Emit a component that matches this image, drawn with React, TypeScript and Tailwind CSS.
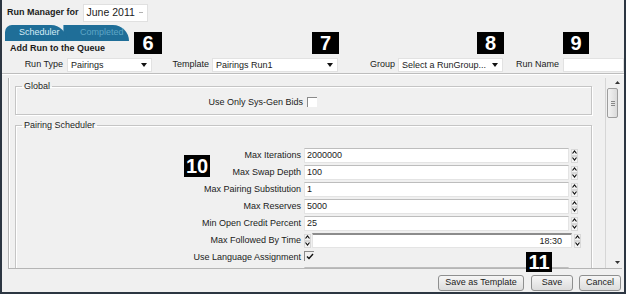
import type { FC, ReactNode } from 'react';

const Badge: FC<{ children: ReactNode; className: string }> = ({ children, className }) => (
  <div
    className={`absolute flex items-center justify-center bg-black text-white font-bold text-[20px] leading-none ${className}`}
  >
    {children}
  </div>
);

const Caret = () => (
  <svg width="6" height="4" viewBox="0 0 6 4" className="shrink-0">
    <path d="M0 0H6L3 4Z" fill="#111" />
  </svg>
);

const Select: FC<{ text: string; className: string }> = ({ text, className }) => (
  <div
    className={`flex items-center justify-between h-[14px] bg-white border border-[#e2e2e2] pl-[3px] pr-[4px] ${className}`}
  >
    <span className="leading-[12px] whitespace-nowrap">{text}</span>
    <Caret />
  </div>
);

const Arrow: FC<{ up?: boolean }> = ({ up }) => (
  <div className="flex items-center justify-center w-[7px] h-[7px] bg-[#f4f4f4] border border-[#d8d8d8]">
    <svg width="5" height="4" viewBox="0 0 5 4">
      <path d={up ? 'M0.5 3.5L2.5 1L4.5 3.5' : 'M0.5 0.5L2.5 3L4.5 0.5'} stroke="#111" strokeWidth="1.2" fill="none" />
    </svg>
  </div>
);

const Spin: FC<{ className?: string }> = ({ className = '' }) => (
  <div className={`flex flex-col w-[7px] h-[14px] ${className}`}>
    <Arrow up />
    <Arrow />
  </div>
);

const Row: FC<{ label: string; value?: string }> = ({ label, value }) => (
  <div className="flex items-center h-[17px]">
    <div className="w-[288px] pr-[3px] text-right whitespace-nowrap">{label}</div>
    <div className="w-[265px] h-[15px] bg-white border border-[#e4e4e4] border-t-[#bdbdbd] pl-[2px] leading-[13px]">
      {value}
    </div>
    <Spin className="ml-[2px]" />
  </div>
);

const Button: FC<{ text: string; className: string }> = ({ text, className }) => (
  <div
    className={`flex items-center justify-center h-[16px] whitespace-nowrap rounded-[3px] border border-[#8e8f8f] bg-gradient-to-b from-[#f6f6f6] to-[#dcdcdc] ${className}`}
  >
    {text}
  </div>
);

const App: FC = () => {
  return (
    <div className="relative w-[626px] h-[294px] overflow-hidden bg-[#f0f0f0] border-x-2 border-b-2 border-[#2c3642] font-['Liberation_Sans',Arial,sans-serif] text-[9px] text-[#1b1b1b]">
      {/* header */}
      <div className="flex items-center h-[19px] mt-[3px] pl-[5px]">
        <span className="font-bold whitespace-nowrap">Run Manager for</span>
        <div className="flex items-center justify-between ml-[4px] w-[65px] h-[18px] bg-white border border-[#e0e0e0] pl-[3px] pr-[4px]">
          <span className="text-[10.5px] leading-none whitespace-nowrap">June 2011</span>
          <span className="w-[4px] h-[1px] bg-[#b0b0b0]" />
        </div>
      </div>

      {/* tabs */}
      <div className="flex h-[16px] mt-[3px] pl-[3px]">
        <div className="relative z-10 flex items-center w-[62px] pl-[14px] bg-[#1f6e98] rounded-tl-[7px] rounded-tr-[16px] text-[#d6ecf6]">
          Scheduler
        </div>
        <div className="-ml-[4px] flex items-center w-[66px] pl-[16px] bg-[#1f6e98] border-l border-[#6aa7c6] rounded-tr-[16px] text-[#5ea6c6]">
          Completed
        </div>
      </div>

      <div className="h-[15px] pl-[8px] flex items-center font-bold whitespace-nowrap">Add Run to the Queue</div>

      {/* run params */}
      <div className="flex items-center h-[15px] mt-[1px] whitespace-nowrap">
        <div className="w-[61px] text-right">Run Type</div>
        <Select text="Pairings" className="ml-[4px] w-[85px]" />
        <div className="w-[57px] text-right">Template</div>
        <Select text="Pairings Run1" className="ml-[3px] w-[126px]" />
        <div className="w-[57px] text-right">Group</div>
        <Select text="Select a RunGroup..." className="ml-[3px] w-[105px]" />
        <div className="w-[56px] text-right">Run Name</div>
        <div className="ml-[4px] flex-1 h-[14px] bg-white border border-[#e2e2e2]" />
      </div>

      <div className="mt-[1px] border-t border-[#bdbdbd] border-b border-b-white" />

      {/* scroll area */}
      <div className="flex h-[191px] mt-[3px] ml-[6px] mr-[2px] border-l border-b border-[#b5b5b5]">
        <div className="flex-1 overflow-hidden pl-[5px] pr-[13px] border-l border-white">
          <fieldset className="mt-[2px] h-[35px] border border-[#c5c5c5] shadow-[inset_1px_1px_0_#fff,1px_1px_0_#fff]">
            <legend className="ml-[6px] px-[2px] leading-[13px]">Global</legend>
            <div className="flex items-center h-[14px] mt-[3px]">
              <div className="w-[289px] pr-[2px] text-right whitespace-nowrap">Use Only Sys-Gen Bids</div>
              <div className="ml-[2px] -mt-[2px] w-[10px] h-[10px] bg-white border-t border-l border-[#8a8a8a]" />
            </div>
          </fieldset>

          <fieldset className="mt-[4px] h-[200px] border border-[#c5c5c5] shadow-[inset_1px_1px_0_#fff,1px_1px_0_#fff]">
            <legend className="ml-[6px] px-[2px] leading-[13px]">Pairing Scheduler</legend>
            <div className="pt-[15px]">
              <Row label="Max Iterations" value="2000000" />
              <Row label="Max Swap Depth" value="100" />
              <Row label="Max Pairing Substitution" value="1" />
              <Row label="Max Reserves" value="5000" />
              <Row label="Min Open Credit Percent" value="25" />
              <div className="flex items-center h-[17px]">
                <div className="w-[288px] pr-[3px] text-right whitespace-nowrap">Max Followed By Time</div>
                <Spin />
                <div className="ml-[1px] w-[260px] h-[15px] bg-white border border-[#e4e4e4] border-t-2 border-t-[#8c8c8c] pr-[9px] text-right leading-[12px]">
                  18:30
                </div>
                <Spin className="ml-[2px]" />
              </div>
              <div className="flex items-center h-[17px]">
                <div className="w-[288px] pr-[3px] text-right whitespace-nowrap">Use Language Assignment</div>
                <div className="relative -mt-[3px] w-[10px] h-[10px] border-t border-l border-[#8a8a8a]">
                  <svg width="8" height="7" viewBox="0 0 8 7" className="absolute left-[1px] top-[1px]">
                    <path d="M1 3.5L3 5.5L7 1" stroke="#111" strokeWidth="1.4" fill="none" />
                  </svg>
                </div>
              </div>
              <Row label="" />
            </div>
          </fieldset>
        </div>

        {/* scrollbar */}
        <div className="relative w-[17px] border-l border-[#d6d6d6] flex flex-col items-end pr-[2px]">
          <svg width="5" height="3" viewBox="0 0 5 3" className="mt-[3px]">
            <path d="M0 3L2.5 0L5 3Z" fill="#333" />
          </svg>
          <div className="self-start ml-[1px] mt-[4px] w-[11px] h-[30px] rounded-[2px] border border-[#9d9d9d] bg-gradient-to-r from-[#f3f3f3] to-[#dadada] flex flex-col items-center justify-center gap-[1px]">
            <span className="w-[4px] h-px bg-[#888]" />
            <span className="w-[4px] h-px bg-[#888]" />
            <span className="w-[4px] h-px bg-[#888]" />
          </div>
          <svg width="5" height="3" viewBox="0 0 5 3" className="mt-auto mb-[4px]">
            <path d="M0 0L5 0L2.5 3Z" fill="#333" />
          </svg>
        </div>
      </div>

      {/* buttons */}
      <div className="flex justify-end pt-[6px] pr-[3px]">
        <Button text="Save as Template" className="w-[86px]" />
        <Button text="Save" className="ml-[7px] w-[42px]" />
        <Button text="Cancel" className="ml-[6px] w-[42px]" />
      </div>

      <Badge className="left-[132px] top-[32px] w-[28px] h-[22px]">6</Badge>
      <Badge className="left-[310px] top-[32px] w-[27px] h-[22px]">7</Badge>
      <Badge className="left-[475px] top-[32px] w-[27px] h-[22px]">8</Badge>
      <Badge className="left-[561px] top-[32px] w-[26px] h-[22px]">9</Badge>
      <Badge className="left-[182px] top-[155px] w-[26px] h-[22px]">10</Badge>
      <Badge className="left-[524px] top-[252px] w-[26px] h-[20px]">11</Badge>
    </div>
  );
};

export default App;
